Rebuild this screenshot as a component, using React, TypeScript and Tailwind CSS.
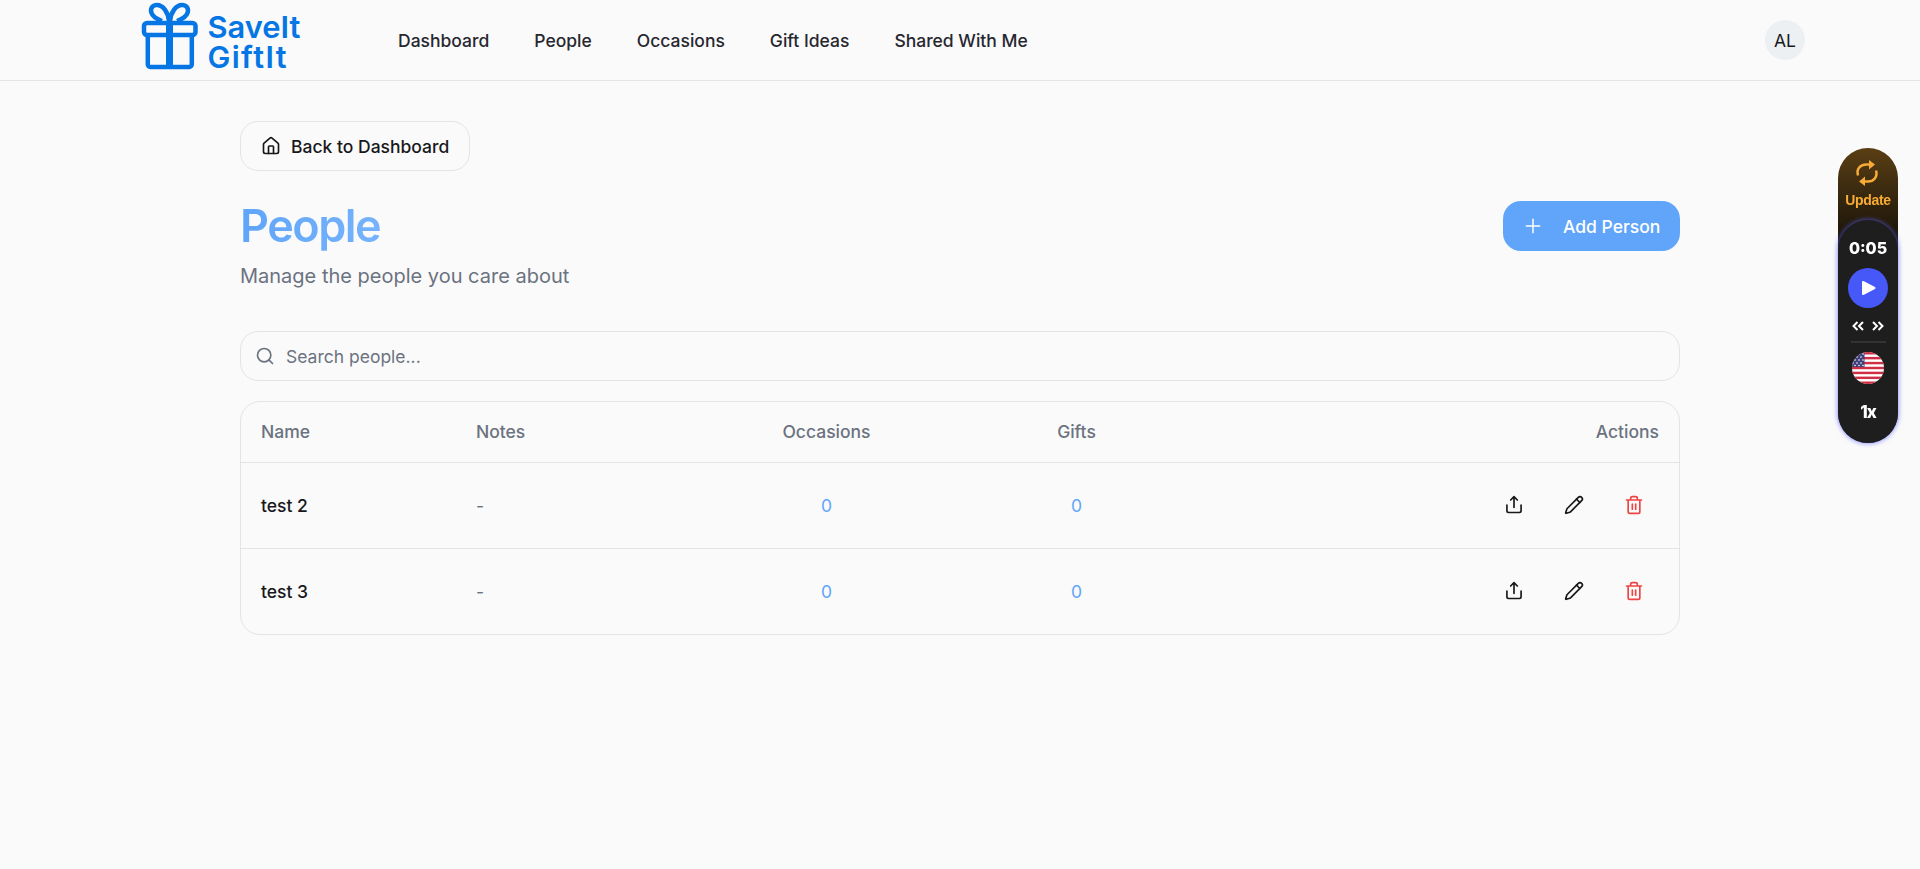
import React, { useState } from "react";

const navItems = ["Dashboard", "People", "Occasions", "Gift Ideas", "Shared With Me"];

const people = [
  { id: 1, name: "test 2", notes: "", occasions: 0, gifts: 0 },
  { id: 2, name: "test 3", notes: "", occasions: 0, gifts: 0 },
];

const columns = "grid grid-cols-[215px_231px_279px_221px_1fr] items-center";

const Icon = ({
  children,
  size = 20,
  className = "",
}: {
  children: React.ReactNode;
  size?: number;
  className?: string;
}) => (
  <svg
    width={size}
    height={size}
    viewBox="0 0 24 24"
    fill="none"
    stroke="currentColor"
    strokeWidth="2"
    strokeLinecap="round"
    strokeLinejoin="round"
    className={className}
  >
    {children}
  </svg>
);

const Logo = () => (
  <svg width="164" height="80" viewBox="0 0 164 80" className="shrink-0">
    <g fill="none" stroke="#0576e3" strokeLinejoin="round">
      <rect x="4" y="23" width="51.5" height="12" rx="3" strokeWidth="4.5" />
      <path d="M7.8 36v28.500a2.500 2.500 0 0 0 2.500 2.500h39a2.500 2.500 0 0 0 2.500-2.500V36" strokeWidth="4.500" />
      <path d="M29.500 21v46" strokeWidth="7" />
      <path
        d="M29 21C28 12 23 5 17 5c-5 0-7 4-5.500 8C13 17.500 18 19.500 22 21M30 21C31 12 36 5 42 5c5 0 7 4 5.500 8C46 17.500 41 19.500 37 21"
        strokeWidth="4.500"
      />
    </g>
    <g fill="#0576e3" fontFamily="Inter, sans-serif" fontWeight="600" fontSize="30.5">
      <text x="67.5" y="37.500" textLength="93" lengthAdjust="spacingAndGlyphs">SaveIt</text>
      <text x="67.5" y="67.500" textLength="79" lengthAdjust="spacing">GiftIt</text>
    </g>
  </svg>
);

const Header = () => (
  <header className="h-[81px] border-b border-[#e4e4e9]">
    <div className="flex items-center h-20 pl-[140px] pr-[115px]">
      <Logo />
      <nav className="flex items-center gap-[45px] ml-[94px] pt-px">
        {navItems.map((item) => (
          <a key={item} href="#" className="font-medium text-[#27272f]">
            {item}
          </a>
        ))}
      </nav>
      <div className="ml-auto size-10 pt-px rounded-full bg-[#ecf0f3] flex items-center justify-center">
        AL
      </div>
    </div>
  </header>
);

const UsFlag = () => (
  <svg width="32" height="32" viewBox="0 0 32 32">
    <clipPath id="round">
      <circle cx="16" cy="16" r="16" />
    </clipPath>
    <g clipPath="url(#round)">
      <rect width="32" height="32" fill="#fff" />
      {[0, 1, 2, 3, 4, 5, 6].map((i) => (
        <rect key={i} y={i * 4.92} width="32" height="2.46" fill="#cf2e45" />
      ))}
      <rect width="12.500" height="15" fill="#3f3f7c" />
      {[2, 5, 8, 11, 13.5].map((y, row) =>
        [2, 6, 10].map((x) => (
          <circle key={`${x}-${y}`} cx={row % 2 ? x - 1 : x + 1} cy={y} r="0.8" fill="#fff" />
        ))
      )}
    </g>
  </svg>
);

// Floating playback control
const PlayerWidget = () => (
  <div className="fixed top-[148px] right-[22px] w-[60px] h-[295px] rounded-full bg-linear-to-b from-[#5a3f14] via-[#1c1509] via-30% to-[#1c1509] flex flex-col items-center text-white">
    <svg width="24" height="26" viewBox="0 0 24 26" className="mt-3 mr-[2px] text-[#f8ab35]" fill="none" stroke="currentColor" strokeWidth="2.500">
      <path d="M3 15.500C1 9 5.500 4.500 11 4.500h5" />
      <path d="M21 10.500C23 17 18.500 21.500 13 21.500H8" />
      <path d="M14 0 20 4.500 14 9.500zM10 16.500 4 21.500 10 26z" fill="currentColor" stroke="none" />
    </svg>
    <span className="mt-[5px] h-[18px] text-[14px] leading-[18px] font-bold tracking-[-0.3px] text-[#f8ab35] font-['Liberation_Sans',sans-serif]">
      Update
    </span>
    <div className="mt-[11px] w-full h-[223px] rounded-full bg-[#1e1e1e] shadow-[0_0_4px_1px_rgba(91,99,255,0.6)] flex flex-col items-center">
      <span className="mt-[18px] h-5 text-base leading-5 font-extrabold">0:05</span>
      <button className="mt-[10px] size-10 shrink-0 rounded-full bg-[#4658f8] flex items-center justify-center">
        <svg width="16" height="18" viewBox="0 0 16 18" fill="#fff" stroke="#fff" strokeWidth="2" strokeLinejoin="round" className="ml-[2px]">
          <path d="M2 3v12l11.500-6z" />
        </svg>
      </button>
      <div className="mt-[12px] flex gap-2">
        <svg width="12" height="12" viewBox="0 0 12 12" fill="none" stroke="#fff" strokeWidth="2">
          <path d="M5.500 2 1.500 6l4 4M11 2 7 6l4 4" />
        </svg>
        <svg width="12" height="12" viewBox="0 0 12 12" fill="none" stroke="#fff" strokeWidth="2">
          <path d="m1 2 4 4-4 4M6.500 2l4 4-4 4" />
        </svg>
      </div>
      <div className="mt-[9px] mb-[9px] w-[35px] h-[2px] bg-[#333]" />
      <UsFlag />
      <span className="mt-[18px] text-[17px] leading-5 font-extrabold tracking-[-1px]">1x</span>
    </div>
  </div>
);

export default function App() {
  const [search, setSearch] = useState("");
  const filtered = people.filter((p) => p.name.includes(search));

  return (
    <div className="min-h-screen bg-[#fafafa] text-[#18181b] text-[17.5px] leading-[25px] font-['Inter',sans-serif]">
      <Header />

      <main className="w-[1440px] mx-auto pt-10">
        <button className="flex items-center gap-[10px] h-[50px] px-5 rounded-[18px] border border-[#e4e4e7] font-medium">
          <Icon>
            <path d="M15 21v-8a1 1 0 0 0-1-1h-4a1 1 0 0 0-1 1v8" />
            <path d="M3 10a2 2 0 0 1 .709-1.528l7-5.999a2 2 0 0 1 2.582 0l7 5.999A2 2 0 0 1 21 10v9a2 2 0 0 1-2 2H5a2 2 0 0 1-2-2z" />
          </Icon>
          Back to Dashboard
        </button>

        <div className="flex justify-between mt-[30px]">
          <div>
            <h1 className="text-[45px] leading-[50px] font-semibold tracking-[-1.500px] bg-linear-to-r from-[#60a5fa] to-[#93c5fd] bg-clip-text text-transparent">
              People
            </h1>
            <p className="mt-[9px] text-[20px] leading-[32px] text-[#6b7280]">
              Manage the people you care about
            </p>
          </div>
          <button className="flex items-center h-[50px] w-[177px] pl-5 rounded-[18px] bg-[#60a5fa] text-white font-medium">
            <Icon className="shrink-0">
              <path d="M4 12h16M12 4v16" strokeWidth="1.800" />
            </Icon>
            <span className="ml-5 whitespace-nowrap">Add Person</span>
          </button>
        </div>

        <div className="flex items-center h-[50px] mt-[39px] pl-[14px] rounded-[18px] border border-[#e4e4e7]">
          <Icon className="text-[#6b7280]">
            <circle cx="11" cy="11" r="8" />
            <path d="m21 21-4.300-4.300" />
          </Icon>
          <input
            value={search}
            onChange={(e) => setSearch(e.target.value)}
            placeholder="Search people..."
            className="flex-1 ml-[11px] outline-none placeholder:text-[#6b7280]"
          />
        </div>

        <div className="mt-5 rounded-[20px] border border-[#e4e4e7]">
          <div className={`${columns} h-[61px] pb-[2px] border-b border-[#e4e4e7] font-medium text-[#6b7280]`}>
            <div className="px-5">Name</div>
            <div className="px-5">Notes</div>
            <div className="text-center">Occasions</div>
            <div className="text-center">Gifts</div>
            <div className="px-5 text-right">Actions</div>
          </div>
          {filtered.map((person) => (
            <div key={person.id} className={`${columns} h-[86px] border-b border-[#e4e4e7] last:border-b-0 last:h-[85px]`}>
              <div className="px-5 font-medium">{person.name}</div>
              <div className="px-5 text-[#6b7280]">{person.notes || "-"}</div>
              <div className="text-center text-[#60a5fa]">{person.occasions}</div>
              <div className="text-center text-[#60a5fa]">{person.gifts}</div>
              <div className="flex justify-end gap-10 pr-[35px] pb-px">
                <Icon>
                  <path d="M3.500 12v7a2 2 0 0 0 2 2h13a2 2 0 0 0 2-2v-7" />
                  <path d="m16 6-4-4-4 4M12 2v13" />
                </Icon>
                <Icon>
                  <path d="M21.174 6.812a1 1 0 0 0-3.986-3.987L3.842 16.174a2 2 0 0 0-.500.830l-1.321 4.352a.500.500 0 0 0 .623.622l4.353-1.320a2 2 0 0 0 .830-.497z" />
                  <path d="m15 5 4 4" />
                </Icon>
                <Icon className="text-[#ef4444]">
                  <path d="M3 6h18M19 6v14a2 2 0 0 1-2 2H7a2 2 0 0 1-2-2V6M8 6V4a2 2 0 0 1 2-2h4a2 2 0 0 1 2 2v2M10 11v6M14 11v6" />
                </Icon>
              </div>
            </div>
          ))}
        </div>
      </main>

      <PlayerWidget />
    </div>
  );
}
